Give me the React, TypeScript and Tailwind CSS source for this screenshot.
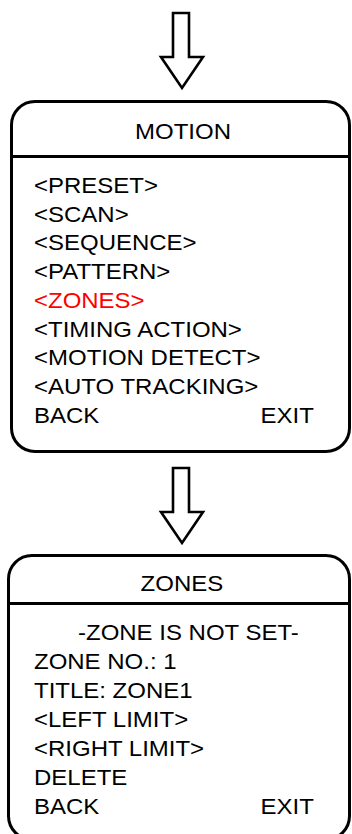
import React from "react";

const Arrow = ({ className }: { className: string }) => (
  <svg width="48" height="82" viewBox="0 0 48 82" className={className}>
    <polygon
      points="15,3 31,3 31,47 45,47 24,78 3,47 15,47"
      fill="white"
      stroke="black"
      strokeWidth="2.6"
      strokeLinejoin="miter"
    />
  </svg>
);

const T = ({ children, right = false }: { children: React.ReactNode; right?: boolean }) => (
  <span className={"inline-block scale-x-[1.09] " + (right ? "origin-right" : "origin-left")}>{children}</span>
);

const Line = ({ children, className = "" }: { children: React.ReactNode; className?: string }) => (
  <div className={"whitespace-nowrap " + className}>
    <T>{children}</T>
  </div>
);

const Foot = () => (
  <div className="flex justify-between">
    <T>BACK</T>
    <T right>EXIT</T>
  </div>
);

export default function App() {
  return (
    <div
      className="w-[352px] overflow-hidden bg-white text-[22px] text-black"
      style={{ fontFamily: '"Liberation Sans", Arial, sans-serif', height: 834 }}
    >
      <div className="flex h-[100px] flex-col">
        <Arrow className="ml-[158px] mt-[10px]" />
      </div>

      <div className="ml-[10px] flex h-[353px] w-[341px] flex-col rounded-[25px] border-[3px] border-black">
        <div className="flex h-[55px] items-center justify-center border-b-[3px] border-black pl-[5px] pt-[6px]">
          <span className="inline-block origin-center scale-x-[1.09] leading-none">MOTION</span>
        </div>
        <div className="flex flex-col pl-[21px] pr-[34px] pt-[14px] leading-[28.7px]">
          <Line>&lt;PRESET&gt;</Line>
          <Line>&lt;SCAN&gt;</Line>
          <Line>&lt;SEQUENCE&gt;</Line>
          <Line>&lt;PATTERN&gt;</Line>
          <Line className="text-[#ff0000]">&lt;ZONES&gt;</Line>
          <Line>&lt;TIMING ACTION&gt;</Line>
          <Line>&lt;MOTION DETECT&gt;</Line>
          <Line>&lt;AUTO TRACKING&gt;</Line>
          <Foot />
        </div>
      </div>

      <div className="flex h-[101px] flex-col">
        <Arrow className="ml-[158px] mt-[12px]" />
      </div>

      <div className="ml-[7px] flex h-[287px] w-[344px] flex-col rounded-[25px] border-[3px] border-black">
        <div className="flex h-[48px] items-center justify-center border-b-[3px] border-black pl-[6px] pt-[8px]">
          <span className="inline-block origin-center scale-x-[1.09] leading-none">ZONES</span>
        </div>
        <div className="flex flex-col pl-[24px] pr-[34px] pt-[13px] leading-[29px]">
          <Line className="pl-[44px]">-ZONE IS NOT SET-</Line>
          <Line>ZONE NO.: 1</Line>
          <Line>TITLE: ZONE1</Line>
          <Line>&lt;LEFT LIMIT&gt;</Line>
          <Line>&lt;RIGHT LIMIT&gt;</Line>
          <Line>DELETE</Line>
          <Foot />
        </div>
      </div>
    </div>
  );
}
